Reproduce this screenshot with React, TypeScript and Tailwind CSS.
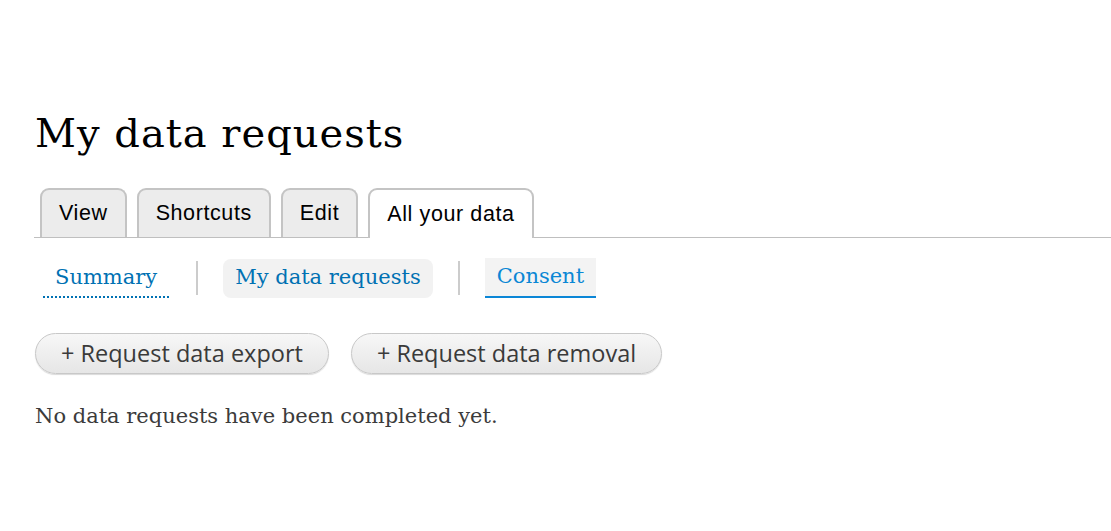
export default function App() {
  const serif = { fontFamily: '"DejaVu Serif", Georgia, serif' };
  return (
    <div className="w-[1111px] h-[531px] bg-white overflow-hidden pt-[103px]">
      <h1 className="pl-[35px] text-[40px] leading-[60px] tracking-[1px] text-black font-normal" style={serif}>
        My data requests
      </h1>
      <div className="mt-[25px] ml-[34px] flex items-end gap-[10px] pl-[6px] border-b border-[#bfbfbf] h-[50px] font-['Liberation_Sans',Arial,sans-serif]">
        {["View", "Shortcuts", "Edit"].map((t) => (
          <div
            key={t}
            className="h-[49px] px-[17px] flex items-center bg-[#ececec] border-2 border-b-0 border-[#c4c4c4] rounded-t-[9px] text-[21.5px] text-black tracking-[0.6px]"
          >
            {t}
          </div>
        ))}
        <div className="h-[50px] -mb-px px-[17px] flex items-center bg-white border-2 border-b-0 border-[#c4c4c4] rounded-t-[9px] text-[21.5px] text-black tracking-[0.6px]">
          All your data
        </div>
      </div>
      <div className="mt-[20px] ml-[43px] flex items-center text-[21px]" style={serif}>
        <div className="h-[39px] flex items-center px-[12px] text-[#0071b3] relative">
          Summary
          <span className="absolute left-0 right-0 bottom-0 border-b-2 border-dotted border-[#0071b3]" />
        </div>
        <div className="w-[2px] h-[34px] bg-[#cccccc] ml-[27px] mr-[25px]" />
        <div className="h-[39px] flex items-center px-[12px] rounded-[8px] bg-[#f2f2f2] text-[#0071b3]">
          My data requests
        </div>
        <div className="w-[2px] h-[34px] bg-[#cccccc] mx-[25px]" />
        <div className="h-[40px] flex items-center px-[12px] bg-[#f3f3f3] text-[#0a87d5] border-b-2 border-[#0b86d6]">
          Consent
        </div>
      </div>
      <div className="mt-[35px] ml-[35px] flex gap-[22px] font-['Open_Sans',sans-serif] text-[23.5px] text-[#3a3a3a]">
        <button className="h-[41px] px-[25px] rounded-full border border-[#c8c8c8] bg-gradient-to-b from-[#f7f7f7] to-[#e6e6e6] shadow-[0_1px_1px_rgba(0,0,0,0.15)]">
          + Request data export
        </button>
        <button className="h-[41px] px-[25px] rounded-full border border-[#c8c8c8] bg-gradient-to-b from-[#f7f7f7] to-[#e6e6e6] shadow-[0_1px_1px_rgba(0,0,0,0.15)]">
          + Request data removal
        </button>
      </div>
      <p className="mt-[27px] ml-[35px] text-[21px] text-[#3b3b3b]" style={serif}>
        No data requests have been completed yet.
      </p>
    </div>
  );
}
